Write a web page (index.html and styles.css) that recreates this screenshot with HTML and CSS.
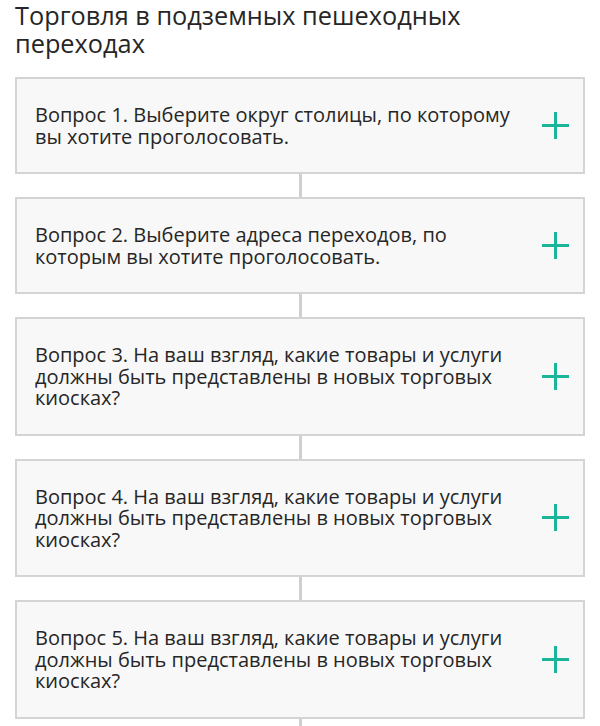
FILE: index.html
```html
<!DOCTYPE html>
<html lang="ru">
<head>
<meta charset="utf-8">
<link rel="stylesheet" href="styles.css">
</head>
<body>
<div class="page">
  <h1 class="title">Торговля в подземных пешеходных переходах</h1>
  <div class="list">
    <div class="card">
      <div class="q">Вопрос 1. Выберите округ столицы, по которому вы хотите проголосовать.</div>
      <span class="plus"></span>
    </div>
    <div class="link"></div>
    <div class="card">
      <div class="q">Вопрос 2. Выберите адреса переходов, по которым вы хотите проголосовать.</div>
      <span class="plus"></span>
    </div>
    <div class="link"></div>
    <div class="card">
      <div class="q">Вопрос 3. На ваш взгляд, какие товары и услуги должны быть представлены в новых торговых киосках?</div>
      <span class="plus"></span>
    </div>
    <div class="link"></div>
    <div class="card">
      <div class="q">Вопрос 4. На ваш взгляд, какие товары и услуги должны быть представлены в новых торговых киосках?</div>
      <span class="plus"></span>
    </div>
    <div class="link"></div>
    <div class="card">
      <div class="q">Вопрос 5. На ваш взгляд, какие товары и услуги должны быть представлены в новых торговых киосках?</div>
      <span class="plus"></span>
    </div>
    <div class="link"></div>
  </div>
</div>
</body>
</html>
```

FILE: styles.css
```css
html, body {
  margin: 0;
  padding: 0;
  background: #fff;
}
body {
  font-family: "Open Sans", "Noto Sans", sans-serif;
  color: #262626;
}
.page {
  padding: 0 15px;
}
.title {
  margin: 0;
  padding-top: 1px;
  font-size: 25.3px;
  line-height: 28px;
  font-weight: 400;
  color: #262626;
}
.list {
  margin-top: 20px;
  display: flex;
  flex-direction: column;
}
.card {
  display: flex;
  align-items: center;
  justify-content: space-between;
  background: #f8f8f8;
  border: 2px solid #d4d4d4;
  padding: 25px 14px 25px 18px;
}
.q {
  font-size: 20px;
  line-height: 21.5px;
  width: 496px;
}
.plus {
  position: relative;
  width: 27px;
  height: 27px;
  flex: none;
}
.plus::before, .plus::after {
  content: "";
  position: absolute;
  background: #1bb59a;
}
.plus::before {
  left: 0;
  right: 0;
  top: 12px;
  height: 3px;
}
.plus::after {
  top: 0;
  bottom: 0;
  left: 12px;
  width: 3px;
}
.link {
  align-self: center;
  width: 3px;
  height: 23px;
  background: #cfcfcf;
}
```
